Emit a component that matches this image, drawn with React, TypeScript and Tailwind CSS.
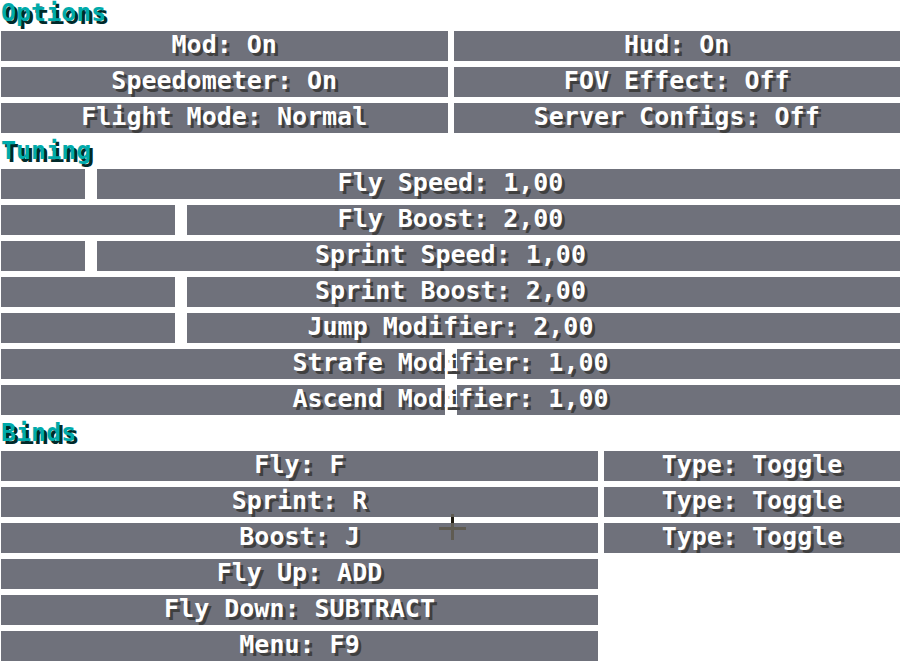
import React from 'react';

const options = [
  'Mod: On',
  'Hud: On',
  'Speedometer: On',
  'FOV Effect: Off',
  'Flight Mode: Normal',
  'Server Configs: Off',
];

// knob offset = fraction of the track (track width 899 - knob 12)
const sliders = [
  { label: 'Fly Speed: 1,00', pos: 84 },
  { label: 'Fly Boost: 2,00', pos: 174 },
  { label: 'Sprint Speed: 1,00', pos: 84 },
  { label: 'Sprint Boost: 2,00', pos: 174 },
  { label: 'Jump Modifier: 2,00', pos: 174 },
  { label: 'Strafe Modifier: 1,00', pos: 444 },
  { label: 'Ascend Modifier: 1,00', pos: 444 },
];

const binds = [
  { label: 'Fly: F', type: 'Type: Toggle' },
  { label: 'Sprint: R', type: 'Type: Toggle' },
  { label: 'Boost: J', type: 'Type: Toggle' },
  { label: 'Fly Up: ADD' },
  { label: 'Fly Down: SUBTRACT' },
  { label: 'Menu: F9' },
];

const font = "font-['DejaVu_Sans_Mono',monospace] font-bold text-[25px] whitespace-nowrap";

const Header = ({ title }: { title: string }) => (
  <div className={`h-[30px] leading-[23px] text-[#00aaaa] [text-shadow:3px_3px_0_#002a2a] ${font}`}>
    {title}
  </div>
);

const Button = ({ label }: { label: string }) => (
  <div className={`h-[30px] bg-[#6f717b] text-center leading-[27px] text-white [text-shadow:3px_3px_0_#3f3f3f] ${font}`}>
    {label}
  </div>
);

const Slider = ({ label, pos }: { label: string; pos: number }) => (
  <div className="relative h-[30px] bg-[#6f717b]">
    <div className="absolute top-0 h-[30px] w-[12px] bg-white" style={{ left: pos }} />
    <div className={`relative text-center leading-[27px] text-white [text-shadow:3px_3px_0_#3f3f3f] ${font}`}>
      {label}
    </div>
  </div>
);

export default function App() {
  return (
    <div className="relative w-[901px] h-[661px] bg-white overflow-hidden px-[1px] pt-[1px] flex flex-col gap-[6px]">
      <div className="flex flex-col">
        <Header title="Options" />
        <div className="grid grid-cols-2 gap-[6px]">
          {options.map((o) => (
            <Button key={o} label={o} />
          ))}
        </div>
      </div>

      <div className="flex flex-col">
        <Header title="Tuning" />
        <div className="flex flex-col gap-[6px]">
          {sliders.map((s) => (
            <Slider key={s.label} label={s.label} pos={s.pos} />
          ))}
        </div>
      </div>

      <div className="flex flex-col">
        <Header title="Binds" />
        <div className="flex flex-col gap-[6px]">
          {binds.map((b) => (
            <div key={b.label} className="flex gap-[6px]">
              <div className="w-[597px]">
                <Button label={b.label} />
              </div>
              {b.type && (
                <div className="w-[296px]">
                  <Button label={b.type} />
                </div>
              )}
            </div>
          ))}
        </div>
      </div>

      {/* crosshair */}
      <div className="absolute left-[439px] top-[527px] h-[3px] w-[27px] bg-[#5f5b52]" />
      <div className="absolute left-[451px] top-[514px] h-[26px] w-[3px] bg-[#5f5b52]" />
      <div className="absolute left-[451px] top-[517px] h-[6px] w-[3px] bg-[#1f1b12]" />
    </div>
  );
}
